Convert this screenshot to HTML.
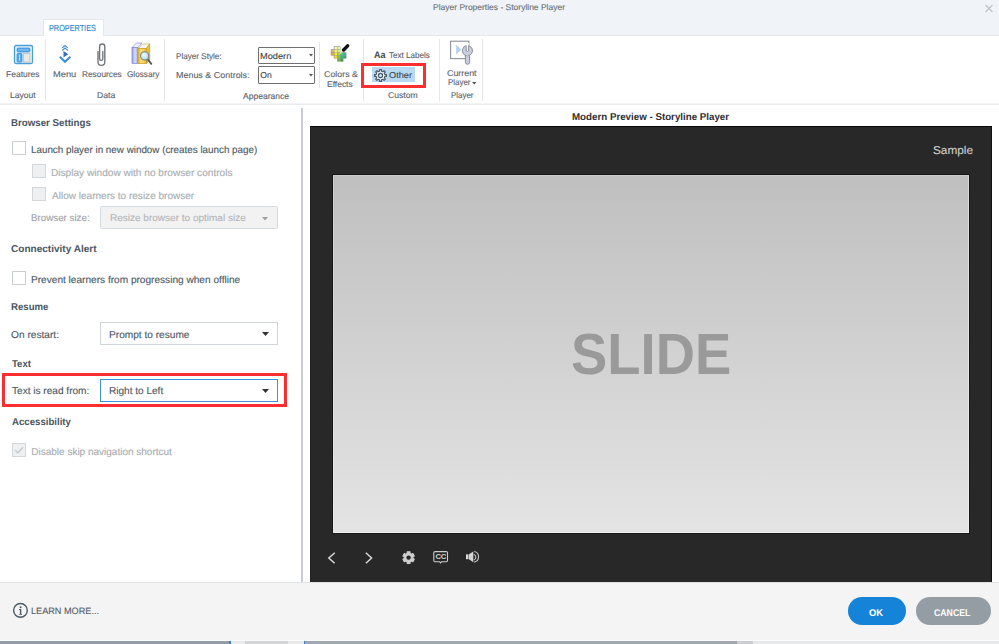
<!DOCTYPE html>
<html><head><meta charset="utf-8"><style>
html,body{margin:0;padding:0;width:999px;height:644px;overflow:hidden;background:#fff;position:relative;font-family:"Liberation Sans",sans-serif;}
.t{position:absolute;white-space:pre;line-height:1;text-rendering:geometricPrecision;}
.a{position:absolute;}

</style></head><body>
<!-- title bar -->
<div class="a" style="left:0;top:0;width:999px;height:35px;background:#f0f4f8;"></div>
<div class="a" style="left:0;top:35px;width:999px;height:1px;background:#e3e8ec;"></div>
<!-- tab -->
<div class="a" style="left:43px;top:19px;width:61px;height:17px;background:#fff;border:1px solid #e3e8ec;border-bottom:none;box-sizing:border-box;"></div>
<!-- ribbon bottom line -->
<div class="a" style="left:0;top:103px;width:999px;height:1px;background:#f2f4f6;"></div>
<div class="a" style="left:0;top:104px;width:999px;height:1px;background:#e8ecef;"></div>
<!-- ribbon separators -->
<div class="a" style="left:45px;top:39px;width:1px;height:62px;background:#e4e8ec;"></div>
<div class="a" style="left:164px;top:39px;width:1px;height:62px;background:#e4e8ec;"></div>
<div class="a" style="left:319px;top:42px;width:1px;height:46px;background:#e4e8ec;"></div>
<div class="a" style="left:363px;top:39px;width:1px;height:62px;background:#e4e8ec;"></div>
<div class="a" style="left:439px;top:39px;width:1px;height:62px;background:#e4e8ec;"></div>
<div class="a" style="left:482px;top:39px;width:1px;height:62px;background:#e4e8ec;"></div>
<!-- ribbon dropdowns -->
<div class="a" style="left:258px;top:46.5px;width:57px;height:17.5px;border:1px solid #6f6f6f;border-radius:1px;box-sizing:border-box;background:#fff;"></div>
<div class="a" style="left:258px;top:66.3px;width:57px;height:17.5px;border:1px solid #6f6f6f;border-radius:1px;box-sizing:border-box;background:#fff;"></div>
<!-- other highlight + red rect -->
<div class="a" style="left:372px;top:67px;width:43px;height:15px;background:#b9d9f2;"></div>
<div class="a" style="left:361px;top:62.8px;width:64.8px;height:24.8px;border:3.5px solid #fe2d30;box-sizing:border-box;"></div>

<!-- vertical divider -->
<div class="a" style="left:301px;top:108px;width:2px;height:474px;background:#c8ccd1;"></div>

<!-- checkboxes -->
<div class="a" style="left:12px;top:141px;width:14px;height:14px;border:1px solid #c9ced3;box-sizing:border-box;background:#fff;"></div>
<div class="a" style="left:32px;top:164px;width:14px;height:14px;border:1px solid #d4d7da;box-sizing:border-box;background:#eff0f1;"></div>
<div class="a" style="left:32px;top:187px;width:14px;height:14px;border:1px solid #d4d7da;box-sizing:border-box;background:#eff0f1;"></div>
<div class="a" style="left:12px;top:271px;width:14px;height:14px;border:1px solid #c9ced3;box-sizing:border-box;background:#fff;"></div>
<div class="a" style="left:12px;top:443px;width:14px;height:14px;border:1px solid #d4d7da;box-sizing:border-box;background:#eff0f1;"></div>

<!-- dropdowns -->
<div class="a" style="left:100px;top:206px;width:178px;height:23px;border:1px solid #d3dae1;border-radius:1.5px;box-sizing:border-box;background:#f2f2f2;"></div>
<div class="a" style="left:100px;top:322px;width:178px;height:23px;border:1px solid #cfd5db;box-sizing:border-box;background:#fff;"></div>
<div class="a" style="left:100px;top:379px;width:178px;height:23px;border:1px solid #3d93d9;box-sizing:border-box;background:#fff;"></div>
<div class="a" style="left:1.7px;top:373.4px;width:285.4px;height:33.2px;border:3.4px solid #fe2d30;box-sizing:border-box;"></div>

<!-- preview -->
<div class="a" style="left:310px;top:126px;width:682px;height:456px;background:#282828;border-top:1px solid #0a0a0a;border-right:1px solid #111;box-sizing:border-box;"></div>
<div class="a" style="left:310px;top:127px;width:1px;height:455px;background:#222;"></div>
<div class="a" style="left:333px;top:175px;width:636px;height:358px;background:linear-gradient(#bfbfbf,#e4e4e4);border-top:1px solid rgba(255,255,255,0.18);border-left:1px solid rgba(255,255,255,0.25);border-right:1px solid rgba(255,255,255,0.4);border-bottom:1px solid rgba(255,255,255,0.45);background-clip:border-box;background-origin:border-box;box-sizing:border-box;box-shadow:0 0 0 1px #181818;"></div>

<!-- footer -->
<div class="a" style="left:0;top:582px;width:999px;height:59px;background:#f4f4f4;border-top:1px solid #dfe3e6;box-sizing:border-box;"></div>
<div class="a" style="left:848px;top:597px;width:58px;height:28px;border-radius:14px;background:#1584d8;"></div>
<div class="a" style="left:915.5px;top:597px;width:75.5px;height:28px;border-radius:14px;background:#949da4;"></div>
<div class="a" style="left:0;top:641px;width:999px;height:3px;background:#e6e7e9;"></div>
<div class="a" style="left:0;top:641px;width:229px;height:3px;background:#949ea9;"></div>
<div class="a" style="left:229px;top:641px;width:2px;height:3px;background:#3a80c8;"></div>
<div class="a" style="left:231px;top:641px;width:73px;height:3px;background:#e9e9ea;"></div>
<div class="a" style="left:245px;top:641px;width:43px;height:3px;background:#d2d3d5;"></div>
<div class="a" style="left:304px;top:641px;width:1px;height:3px;background:#3a80c8;"></div>
<div class="a" style="left:305px;top:641px;width:432px;height:3px;background:#a0a7af;"></div>
<div class="a" style="left:737px;top:641px;width:16px;height:3px;background:#c9cdd1;"></div>
<div class="a" style="left:0;top:640px;width:999px;height:1px;background:#fafafa;"></div>
<!-- close X -->
<svg class="a" style="left:984px;top:4px" width="10" height="9" viewBox="0 0 10 9"><path d="M1.5 1 L8.5 8 M8.5 1 L1.5 8" stroke="#c2c4c6" stroke-width="1.3"/></svg>

<!-- Features icon -->
<svg class="a" style="left:13px;top:44px" width="21" height="21" viewBox="0 0 21 21">
<rect x="1.5" y="1.5" width="18" height="18" rx="1.5" fill="#e9f3fb" stroke="#4a9ed8" stroke-width="1.3"/>
<rect x="4" y="4" width="13" height="4" rx="1" fill="#5aaaf0" stroke="#3a8fd8" stroke-width="0.8"/>
<rect x="4" y="9.5" width="5" height="8.5" rx="0.8" fill="#5aaaf0" stroke="#3a8fd8" stroke-width="0.8"/>
<rect x="10.5" y="9.5" width="6.5" height="8.5" fill="#e4e4e4" stroke="#cbbdb5" stroke-width="0.8"/>
<path d="M12 10.5 V17 M13.7 10.5 V17 M15.4 10.5 V17" stroke="#f5f5f5" stroke-width="0.6"/>
<path d="M6.5 10.5 V17" stroke="#d8ecfc" stroke-width="0.7"/>
<path d="M5 6 H16" stroke="#9ccdf5" stroke-width="0.7"/>
</svg>

<!-- Menu icon -->
<svg class="a" style="left:58px;top:44px" width="15" height="20" viewBox="0 0 15 20">
<path d="M4.3 3.9 L7 1.5 L9.8 3.9" fill="none" stroke="#4a8ed4" stroke-width="1.2"/>
<path d="M4.3 6.5 L7 4.1 L9.8 6.5" fill="none" stroke="#4a8ed4" stroke-width="1.2"/>
<path d="M5.5 7 L10.3 10.3 L5.5 13.4 Z" fill="#3570b8"/>
<path d="M1.8 12.8 L7 17.8 L12.4 12.8" fill="none" stroke="#418cd6" stroke-width="2.1"/>
</svg>

<!-- Paperclip -->
<svg class="a" style="left:96px;top:42px" width="11" height="25" viewBox="96 42 11 25">
<path d="M98 51 V62 A3.4 3.4 0 0 0 104.8 62 V46.6 A2.6 2.6 0 0 0 99.6 46.6 V58.8 A1.6 1.6 0 0 0 102.8 58.8 V51" fill="none" stroke="#6f7478" stroke-width="1.35"/>
</svg>

<!-- Glossary -->
<svg class="a" style="left:131px;top:42px" width="22" height="24" viewBox="0 0 22 24">
<defs><linearGradient id="pg" x1="0" x2="1"><stop offset="0" stop-color="#9098e8"/><stop offset="0.5" stop-color="#d8dcfc"/><stop offset="1" stop-color="#a0a8f0"/></linearGradient>
<linearGradient id="yg" x1="0" x2="1"><stop offset="0" stop-color="#e0b828"/><stop offset="0.4" stop-color="#f8e080"/><stop offset="1" stop-color="#e0b830"/></linearGradient>
<radialGradient id="lg" cx="0.4" cy="0.4" r="0.7"><stop offset="0" stop-color="#f4fbff"/><stop offset="1" stop-color="#a8d0e0"/></radialGradient></defs>
<path d="M1 5.5 L5.5 1 L11 1 L7 5.5 Z" fill="#f0f2fc" stroke="#8890e0" stroke-width="0.7"/>
<rect x="1" y="5.5" width="6" height="16" fill="url(#pg)" stroke="#8088d8" stroke-width="0.7"/>
<path d="M7 6.5 L11.5 2 L18.7 1.8 L15.5 6.5 Z" fill="#f4f4f0" stroke="#c8a840" stroke-width="0.6"/>
<rect x="7" y="6.5" width="8.5" height="15" fill="url(#yg)" stroke="#c89a20" stroke-width="0.7"/>
<path d="M15.5 6.5 L18.7 1.9 V18 L15.5 21.5 Z" fill="#e8c030" stroke="#c89a20" stroke-width="0.7"/>
<path d="M16.3 16.8 L20.3 21.8" stroke="#555b60" stroke-width="1.9" stroke-linecap="round"/>
<circle cx="13.7" cy="13.9" r="4.1" fill="url(#lg)" stroke="#76868e" stroke-width="1.1"/>
</svg>

<!-- Colors & Effects -->
<svg class="a" style="left:330px;top:44px" width="20" height="20" viewBox="0 0 20 20">
<path d="M3.8 2.2 H10.4 V8.2 H16.4 V14.6 H13.4 V17.6 H7.2 V14.6 H3.8 V11.6 H0.8 V5.2 H3.8 Z" fill="#8a96a2"/>
<rect x="4.5" y="2.8" width="2.6" height="2.6" fill="#fff7a8"/><rect x="7.5" y="2.8" width="2.6" height="2.6" fill="#eaf59c"/>
<rect x="1.5" y="5.8" width="2.6" height="2.6" fill="#f6b050"/><rect x="4.5" y="5.8" width="2.6" height="2.6" fill="#fff070"/><rect x="7.5" y="5.8" width="2.6" height="2.6" fill="#d8f080"/>
<rect x="1.5" y="8.8" width="2.6" height="2.6" fill="#f7a030"/><rect x="4.5" y="8.8" width="2.6" height="2.6" fill="#f8e830"/><rect x="7.5" y="8.8" width="2.6" height="2.6" fill="#98d848"/><rect x="10.5" y="8.8" width="2.6" height="2.6" fill="#48c860"/><rect x="13.5" y="8.8" width="2.6" height="2.6" fill="#38b8a0"/>
<rect x="4.5" y="11.8" width="2.6" height="2.6" fill="#f0d820"/><rect x="7.5" y="11.8" width="2.6" height="2.6" fill="#88c840"/><rect x="10.5" y="11.8" width="2.6" height="2.6" fill="#40b858"/><rect x="13.5" y="11.8" width="2.6" height="2.6" fill="#30a8a0"/>
<rect x="7.5" y="14.8" width="2.6" height="2.6" fill="#88b030"/><rect x="10.5" y="14.8" width="2.6" height="2.6" fill="#40a050"/>
<path d="M10 9.6 L14 5.6" stroke="#e8dcb0" stroke-width="1.5"/>
<path d="M13.6 6 L17.6 1.8" stroke="#111" stroke-width="3.4" stroke-linecap="round"/>
</svg>

<!-- ribbon dropdown arrows -->
<svg class="a" style="left:308.5px;top:54.3px" width="5" height="3"><path d="M0 0 H4 L2 2.5Z" fill="#555"/></svg>
<svg class="a" style="left:308.5px;top:74.3px" width="5" height="3"><path d="M0 0 H4 L2 2.5Z" fill="#555"/></svg>

<!-- Gear other -->
<svg class="a" style="left:373px;top:67.5px" width="15" height="15" viewBox="0 0 15 15">
<path d="M6.54 3.10 L6.58 1.57 L8.42 1.57 L8.46 3.10 L9.93 3.71 L11.05 2.66 L12.34 3.95 L11.29 5.07 L11.90 6.54 L13.43 6.58 L13.43 8.42 L11.90 8.46 L11.29 9.93 L12.34 11.05 L11.05 12.34 L9.93 11.29 L8.46 11.90 L8.42 13.43 L6.58 13.43 L6.54 11.90 L5.07 11.29 L3.95 12.34 L2.66 11.05 L3.71 9.93 L3.10 8.46 L1.57 8.42 L1.57 6.58 L3.10 6.54 L3.71 5.07 L2.66 3.95 L3.95 2.66 L5.07 3.71 Z" fill="#eef5fc" stroke="#4a5868" stroke-width="1.2" stroke-linejoin="round"/>
<circle cx="7.5" cy="7.5" r="2.1" fill="#c8e2f6" stroke="#4a5868" stroke-width="1.1"/>
</svg>

<!-- Current Player -->
<svg class="a" style="left:448px;top:39px" width="26" height="27" viewBox="0 0 26 27">
<rect x="2.6" y="2.2" width="18.2" height="17.4" fill="#fff" stroke="#8c9196" stroke-width="1.1"/>
<path d="M8.2 5.7 L13.4 10.6 L8.2 15.6 Z" fill="#b9d0ea"/>
<path d="M17.4 15 V23.2 A2.1 2.1 0 0 0 21.6 23.2 V15 Z" fill="#c9cde0" stroke="#8c9196" stroke-width="1"/>
<rect x="18" y="4" width="2.8" height="8" fill="#fff"/>
<path d="M18.2 6.7 A5.1 5.1 0 1 0 20.6 6.7 V11.2 A1.2 1.2 0 0 1 18.2 11.2 Z" fill="#c9cde0" stroke="#8c9196" stroke-width="1"/>
<path d="M18.4 16 H20.6" stroke="#c9cde0" stroke-width="1.5"/>
</svg>
<svg class="a" style="left:472px;top:82px" width="5" height="3"><path d="M0 0 H4.5 L2.25 2.5Z" fill="#555"/></svg>

<!-- panel dropdown arrows -->
<svg class="a" style="left:262px;top:216.5px" width="6" height="4"><path d="M0 0 H6 L3 3.5Z" fill="#a0a0a0"/></svg>
<svg class="a" style="left:262px;top:332px" width="7" height="4"><path d="M0 0 H7 L3.5 4Z" fill="#333"/></svg>
<svg class="a" style="left:262px;top:389px" width="7" height="4"><path d="M0 0 H7 L3.5 4Z" fill="#333"/></svg>

<!-- disabled check -->
<svg class="a" style="left:12px;top:443px" width="14" height="14" viewBox="0 0 14 14"><path d="M3 7 L5.8 9.8 L11 4.2" fill="none" stroke="#c4c8cc" stroke-width="1.3"/></svg>

<!-- player controls -->
<svg class="a" style="left:320px;top:545px" width="170" height="25" viewBox="320 545 170 25">
<path d="M334.8 552.8 L328.8 558 L334.6 563.3" fill="none" stroke="#d8d8d8" stroke-width="1.5"/>
<path d="M365.8 552.8 L371.6 558 L365.9 563.3" fill="none" stroke="#d8d8d8" stroke-width="1.5"/>
<path d="M407.20 553.43 L407.19 551.87 L410.01 551.87 L410.00 553.43 L411.51 554.30 L412.86 553.52 L414.27 555.95 L412.91 556.73 L412.91 558.47 L414.27 559.25 L412.86 561.68 L411.51 560.90 L410.00 561.77 L410.01 563.33 L407.19 563.33 L407.20 561.77 L405.69 560.90 L404.34 561.68 L402.93 559.25 L404.29 558.47 L404.29 556.73 L402.93 555.95 L404.34 553.52 L405.69 554.30 Z" fill="#cfcfcf" stroke="#cfcfcf" stroke-width="1.2" stroke-linejoin="round" fill-rule="evenodd"/>
<circle cx="408.6" cy="557.6" r="2.2" fill="#282828"/>
<path d="M435 551.6 H446.3 A1.2 1.2 0 0 1 447.5 552.8 V560.5 A1.2 1.2 0 0 1 446.3 561.7 H441.6 L440.6 562.9 L439.6 561.7 H435 A1.2 1.2 0 0 1 433.8 560.5 V552.8 A1.2 1.2 0 0 1 435 551.6 Z" fill="none" stroke="#cccccc" stroke-width="1.1"/>
<text x="440.7" y="559.4" font-family="Liberation Sans" font-weight="700" font-size="7.6" fill="#d4d4d4" text-anchor="middle" letter-spacing="-0.4">CC</text>
<path d="M466 554.4 H468.2 V559.2 H466 Z" fill="#dcdcdc"/>
<path d="M468.6 554.6 L473.3 551.4 V562.2 L468.6 558.9 Z" fill="#d4d4d4"/>
<path d="M473.9 554.4 A2.9 2.9 0 0 1 473.9 559.9" fill="none" stroke="#c8c8c8" stroke-width="1.1"/>
<path d="M474.2 551.5 A5.4 5.4 0 0 1 474.2 562.1" fill="none" stroke="#c8c8c8" stroke-width="1.1"/>
</svg>

<!-- info icon -->
<svg class="a" style="left:11px;top:601px" width="19" height="19" viewBox="0 0 19 19">
<circle cx="9.45" cy="9.4" r="6.85" fill="none" stroke="#4b5a64" stroke-width="1.4"/>
<circle cx="9.6" cy="6.2" r="0.95" fill="#4b5a64"/>
<path d="M8.1 8.1 H10.3 V12.9 H11.1 V13.8 H7.9 V12.9 H8.9 V9 H8.1 Z" fill="#4b5a64"/>
</svg>

<div class='t' style='left:433.09px;top:3px;font-size:8.4px;font-weight:400;color:#6b7075;transform:scaleX(1.0127);transform-origin:0 0;-webkit-text-stroke:0.12px #6b7075;'>Player Properties - Storyline Player</div>
<div class='t' style='left:49.39px;top:24px;font-size:8.8px;font-weight:400;color:#2b86d6;transform:scaleX(0.8287);transform-origin:0 0;-webkit-text-stroke:0.12px #2b86d6;'>PROPERTIES</div>
<div class='t' style='left:6.49px;top:70px;font-size:8.4px;font-weight:400;color:#5b636b;transform:scaleX(1.0154);transform-origin:0 0;-webkit-text-stroke:0.12px #5b636b;'>Features</div>
<div class='t' style='left:10.19px;top:91px;font-size:8.4px;font-weight:400;color:#5b636b;transform:scaleX(1.0222);transform-origin:0 0;-webkit-text-stroke:0.12px #5b636b;'>Layout</div>
<div class='t' style='left:53.45px;top:70px;font-size:8.4px;font-weight:400;color:#5b636b;transform:scaleX(1.1100);transform-origin:0 0;-webkit-text-stroke:0.12px #5b636b;'>Menu</div>
<div class='t' style='left:81.50px;top:70px;font-size:8.4px;font-weight:400;color:#5b636b;transform:scaleX(0.9911);transform-origin:0 0;-webkit-text-stroke:0.12px #5b636b;'>Resources</div>
<div class='t' style='left:126.66px;top:70px;font-size:8.4px;font-weight:400;color:#5b636b;transform:scaleX(0.9758);transform-origin:0 0;-webkit-text-stroke:0.12px #5b636b;'>Glossary</div>
<div class='t' style='left:97.39px;top:91px;font-size:8.4px;font-weight:400;color:#5b636b;transform:scaleX(1.0286);transform-origin:0 0;-webkit-text-stroke:0.12px #5b636b;'>Data</div>
<div class='t' style='left:175.92px;top:52px;font-size:8.4px;font-weight:400;color:#5b636b;transform:scaleX(0.9696);transform-origin:0 0;-webkit-text-stroke:0.12px #5b636b;'>Player Style:</div>
<div class='t' style='left:259.96px;top:52px;font-size:8.6px;font-weight:400;color:#444;transform:scaleX(1.0726);transform-origin:0 0;-webkit-text-stroke:0.12px #444;'>Modern</div>
<div class='t' style='left:175.88px;top:71px;font-size:8.6px;font-weight:400;color:#5b636b;transform:scaleX(1.0403);transform-origin:0 0;-webkit-text-stroke:0.12px #5b636b;'>Menus &amp; Controls:</div>
<div class='t' style='left:260.25px;top:71px;font-size:8.6px;font-weight:400;color:#444;-webkit-text-stroke:0.12px #444;'>On</div>
<div class='t' style='left:323.74px;top:70px;font-size:8.4px;font-weight:400;color:#5b636b;transform:scaleX(1.0583);transform-origin:0 0;-webkit-text-stroke:0.12px #5b636b;'>Colors &amp;</div>
<div class='t' style='left:327.49px;top:80px;font-size:8.4px;font-weight:400;color:#5b636b;transform:scaleX(1.0101);transform-origin:0 0;-webkit-text-stroke:0.12px #5b636b;'>Effects</div>
<div class='t' style='left:243.00px;top:92px;font-size:8.6px;font-weight:400;color:#5b636b;transform:scaleX(0.9935);transform-origin:0 0;-webkit-text-stroke:0.12px #5b636b;'>Appearance</div>
<div class='t' style='left:374.27px;top:51px;font-size:9.6px;font-weight:700;color:#484848;transform:scaleX(0.9388);transform-origin:0 0;'>Aa</div>
<div class='t' style='left:389.30px;top:51px;font-size:8.4px;font-weight:400;color:#5b636b;transform:scaleX(0.9633);transform-origin:0 0;-webkit-text-stroke:0.12px #5b636b;'>Text Labels</div>
<div class='t' style='left:388.73px;top:71px;font-size:8.6px;font-weight:400;color:#3d4752;transform:scaleX(1.0729);transform-origin:0 0;-webkit-text-stroke:0.12px #3d4752;'>Other</div>
<div class='t' style='left:388.14px;top:91px;font-size:8.4px;font-weight:400;color:#5b636b;transform:scaleX(1.0265);transform-origin:0 0;-webkit-text-stroke:0.12px #5b636b;'>Custom</div>
<div class='t' style='left:447.24px;top:69px;font-size:8.4px;font-weight:400;color:#5b636b;transform:scaleX(1.0595);transform-origin:0 0;-webkit-text-stroke:0.12px #5b636b;'>Current</div>
<div class='t' style='left:447.53px;top:78px;font-size:8.4px;font-weight:400;color:#5b636b;transform:scaleX(0.9462);transform-origin:0 0;-webkit-text-stroke:0.12px #5b636b;'>Player</div>
<div class='t' style='left:450.93px;top:91px;font-size:8.4px;font-weight:400;color:#5b636b;transform:scaleX(0.9462);transform-origin:0 0;-webkit-text-stroke:0.12px #5b636b;'>Player</div>
<div class='t' style='left:11.21px;top:119px;font-size:10px;font-weight:700;color:#4a5661;transform:scaleX(0.9706);transform-origin:0 0;'>Browser Settings</div>
<div class='t' style='left:31.26px;top:146px;font-size:10px;font-weight:400;color:#4d5862;transform:scaleX(0.9830);transform-origin:0 0;-webkit-text-stroke:0.12px #4d5862;'>Launch player in new window (creates launch page)</div>
<div class='t' style='left:51.04px;top:169px;font-size:10px;font-weight:400;color:#a8acb0;transform:scaleX(1.0112);transform-origin:0 0;-webkit-text-stroke:0.12px #a8acb0;'>Display window with no browser controls</div>
<div class='t' style='left:51.80px;top:192px;font-size:10px;font-weight:400;color:#a8acb0;transform:scaleX(1.0032);transform-origin:0 0;-webkit-text-stroke:0.12px #a8acb0;'>Allow learners to resize browser</div>
<div class='t' style='left:30.75px;top:214px;font-size:9.8px;font-weight:400;color:#9ea2a6;transform:scaleX(0.9974);transform-origin:0 0;-webkit-text-stroke:0.12px #9ea2a6;'>Browser size:</div>
<div class='t' style='left:109.63px;top:214px;font-size:9.8px;font-weight:400;color:#b4b6b8;transform:scaleX(1.0216);transform-origin:0 0;-webkit-text-stroke:0.12px #b4b6b8;'>Resize browser to optimal size</div>
<div class='t' style='left:11.35px;top:245px;font-size:10px;font-weight:700;color:#4a5661;transform:scaleX(1.0035);transform-origin:0 0;'>Connectivity Alert</div>
<div class='t' style='left:31.24px;top:276px;font-size:10px;font-weight:400;color:#4d5862;transform:scaleX(1.0097);transform-origin:0 0;-webkit-text-stroke:0.12px #4d5862;'>Prevent learners from progressing when offline</div>
<div class='t' style='left:11.12px;top:303px;font-size:10px;font-weight:700;color:#4a5661;transform:scaleX(0.9621);transform-origin:0 0;'>Resume</div>
<div class='t' style='left:11.35px;top:331px;font-size:10px;font-weight:400;color:#4d5862;transform:scaleX(1.0162);transform-origin:0 0;-webkit-text-stroke:0.12px #4d5862;'>On restart:</div>
<div class='t' style='left:109.44px;top:331px;font-size:10px;font-weight:400;color:#4d5862;transform:scaleX(1.0127);transform-origin:0 0;-webkit-text-stroke:0.12px #4d5862;'>Prompt to resume</div>
<div class='t' style='left:11.90px;top:360px;font-size:10px;font-weight:700;color:#4a5661;transform:scaleX(0.9519);transform-origin:0 0;'>Text</div>
<div class='t' style='left:11.90px;top:387px;font-size:10px;font-weight:400;color:#4d5862;transform:scaleX(1.0079);transform-origin:0 0;-webkit-text-stroke:0.12px #4d5862;'>Text is read from:</div>
<div class='t' style='left:109.45px;top:387px;font-size:10px;font-weight:400;color:#4d5862;transform:scaleX(1.0047);transform-origin:0 0;-webkit-text-stroke:0.12px #4d5862;'>Right to Left</div>
<div class='t' style='left:11.66px;top:418px;font-size:10px;font-weight:700;color:#4a5661;transform:scaleX(0.9630);transform-origin:0 0;'>Accessibility</div>
<div class='t' style='left:31.25px;top:448px;font-size:10px;font-weight:400;color:#a8acb0;-webkit-text-stroke:0.12px #a8acb0;'>Disable skip navigation shortcut</div>
<div class='t' style='left:572.11px;top:113px;font-size:9.9px;font-weight:700;color:#303030;transform:scaleX(0.9868);transform-origin:0 0;'>Modern Preview - Storyline Player</div>
<div class='t' style='left:933.18px;top:146px;font-size:11.4px;font-weight:400;color:#cfcfcf;transform:scaleX(1.0358);transform-origin:0 0;-webkit-text-stroke:0.12px #cfcfcf;'>Sample</div>
<div class='t' style='left:570.96px;top:326px;font-size:58px;font-weight:700;color:#9a9a9a;transform:scaleX(0.9379);transform-origin:0 0;'>SLIDE</div>
<div class='t' style='left:30.75px;top:607px;font-size:9.2px;font-weight:400;color:#55616b;transform:scaleX(0.9940);transform-origin:0 0;-webkit-text-stroke:0.12px #55616b;'>LEARN MORE...</div>
<div class='t' style='left:869.16px;top:609px;font-size:9.8px;font-weight:700;color:#ffffff;transform:scaleX(0.9544);transform-origin:0 0;'>OK</div>
<div class='t' style='left:933.68px;top:609px;font-size:9.8px;font-weight:700;color:#ffffff;transform:scaleX(0.8894);transform-origin:0 0;'>CANCEL</div>

</body></html>
